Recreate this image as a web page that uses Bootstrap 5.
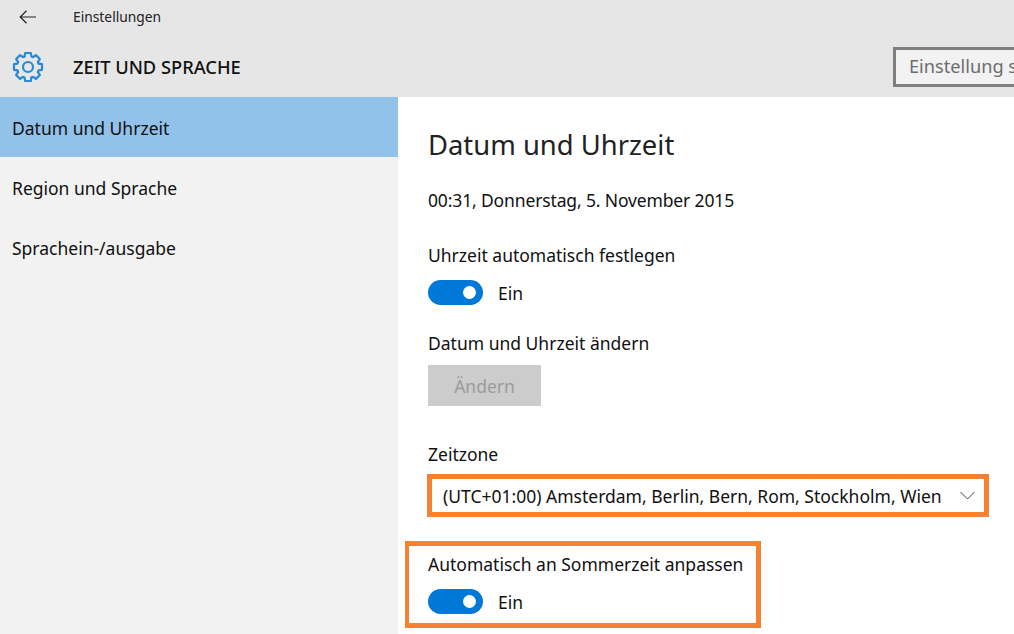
<!DOCTYPE html>
<html lang="de">
<head>
<meta charset="utf-8">
<title>Einstellungen</title>
<link href="https://cdn.jsdelivr.net/npm/bootstrap@5.3.0/dist/css/bootstrap.min.css" rel="stylesheet">
<style>
html,body{height:634px;overflow:hidden;}
body{width:1014px;background:#fff;color:#111;font-family:"Noto Sans","Open Sans",sans-serif;font-size:17.5px;line-height:24px;}
.head-zone{background:#e6e6e6;height:97px;overflow:hidden;}
.title-row{height:34px;padding-left:19px;}
.title-text{font-size:13.8px;line-height:20px;color:#222;margin-left:37px;}
.section-row{height:63px;padding-left:12px;padding-top:3px;}
.section-text{font-size:18.3px;font-weight:500;margin-left:29px;color:#111;}
.search-box{width:181px;height:40px;border:3px solid #7f7f7f;background:#f2f2f2;color:#6d6d6d;margin-left:auto;margin-right:-60px;padding-left:13px;font-size:18.2px;line-height:33px;white-space:nowrap;overflow:hidden;flex:none;}
.main-zone{height:537px;}
.side-zone{width:398px;background:#f2f2f2;flex:none;}
.side-item{height:60px;line-height:62px;padding:0 12px;color:#111;}
.side-on{background:#92c1e9;}
.body-zone{padding-left:30px;flex:1;min-width:0;}
.page-title{font-size:27.4px;line-height:36px;font-weight:400;margin:30px 0 0;color:#222;}
.lbl{margin:0;}
.lbl-now{margin-top:25px;letter-spacing:-.14px;}
.lbl-auto{margin-top:31px;}
.lbl-chg{margin-top:26px;}
.lbl-zone{margin-top:36px;}
.tgl{width:55px;height:25px;border-radius:13px;background:#0078d7;position:relative;flex:none;}
.tgl::after{content:"";position:absolute;right:7px;top:6px;width:13px;height:13px;border-radius:50%;background:#fff;}
.tgl-row{height:25px;margin-top:13px;}
.tgl-text{margin-left:15px;}
.btn.chg-btn{display:block;width:113px;height:41px;background:#ccc;color:#9b9b9b;border:0;border-radius:0;padding:0;margin-top:10px;font-size:17.5px;line-height:43px;opacity:1;}
.zone-box{width:562px;height:43px;border:5px solid #f58233;margin:8px 0 0 -1px;padding:0 9px 0 11px;white-space:nowrap;}
.auto-box{width:356px;height:87px;border:5px solid #f58233;border-left-width:4px;margin:24px 0 0 -23px;padding:6px 0 0 19px;}
</style>
</head>
<body>
<header class="head-zone">
  <div class="title-row d-flex align-items-center">
    <svg width="17" height="14" viewBox="0 0 17 14" fill="none" stroke="#222" stroke-width="1.2"><path d="M1 7h16M7.5 .8 1.2 7l6.3 6.2"/></svg>
    <span class="title-text">Einstellungen</span>
  </div>
  <div class="section-row d-flex align-items-center">
    <svg width="32" height="32" viewBox="-16 -16 32 32" fill="none" stroke="#2b88d8" stroke-width="2.2" stroke-linejoin="round" stroke-linecap="round">
      <defs><path id="gt" d="M-3.4-10.6-2.8-14H2.8L3.4-10.6 5.1-9.9"/></defs>
      <circle r="5"/>
      <use href="#gt"/><use href="#gt" transform="rotate(45)"/><use href="#gt" transform="rotate(90)"/><use href="#gt" transform="rotate(135)"/><use href="#gt" transform="rotate(180)"/><use href="#gt" transform="rotate(225)"/><use href="#gt" transform="rotate(270)"/><use href="#gt" transform="rotate(315)"/>
    </svg>
    <span class="section-text">ZEIT UND SPRACHE</span>
    <div class="search-box">Einstellung suchen</div>
  </div>
</header>
<div class="main-zone d-flex">
  <nav class="side-zone">
    <div class="side-item side-on">Datum und Uhrzeit</div>
    <div class="side-item">Region und Sprache</div>
    <div class="side-item">Sprachein-/ausgabe</div>
  </nav>
  <main class="body-zone">
    <h1 class="page-title">Datum und Uhrzeit</h1>
    <p class="lbl lbl-now">00:31, Donnerstag, 5. November 2015</p>
    <p class="lbl lbl-auto">Uhrzeit automatisch festlegen</p>
    <div class="tgl-row d-flex align-items-center"><span class="tgl"></span><span class="tgl-text">Ein</span></div>
    <p class="lbl lbl-chg">Datum und Uhrzeit ändern</p>
    <button class="btn chg-btn" type="button" disabled>Ändern</button>
    <p class="lbl lbl-zone">Zeitzone</p>
    <div class="zone-box d-flex align-items-center justify-content-between">
      <span>(UTC+01:00) Amsterdam, Berlin, Bern, Rom, Stockholm, Wien</span>
      <svg width="15" height="9" viewBox="0 0 15 9" fill="none" stroke="#444" stroke-width="1"><path d="M.5 1l7 7 7-7"/></svg>
    </div>
    <div class="auto-box">
      <p class="lbl">Automatisch an Sommerzeit anpassen</p>
      <div class="tgl-row d-flex align-items-center"><span class="tgl"></span><span class="tgl-text">Ein</span></div>
    </div>
  </main>
</div>
</body>
</html>
